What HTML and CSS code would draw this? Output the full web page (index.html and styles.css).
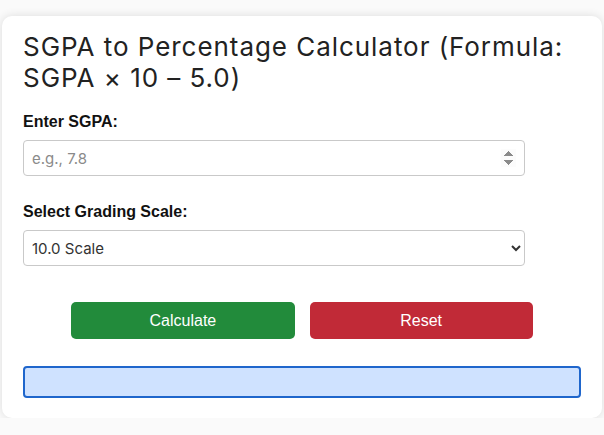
FILE: index.html
```html
<!DOCTYPE html>
<html>
<head>
<meta charset="utf-8">
<link rel="stylesheet" href="styles.css">
</head>
<body>
<div class="card">
  <h2 class="title">SGPA to Percentage Calculator (Formula: SGPA × 10 – 5.0)</h2>
  <label class="label" for="sgpa">Enter SGPA:</label>
  <div class="field">
    <input class="input" id="sgpa" type="number" placeholder="e.g., 7.8">
  </div>
  <label class="label" for="scale">Select Grading Scale:</label>
  <div class="field">
    <select class="input select" id="scale">
      <option>10.0 Scale</option>
    </select>
  </div>
  <div class="buttons">
    <button class="btn btn-green">Calculate</button>
    <button class="btn btn-red">Reset</button>
  </div>
  <div class="result"></div>
</div>
</body>
</html>
```

FILE: styles.css
```css
html, body {
  margin: 0;
  padding: 0;
  background: #fafafa;
}
.card {
  width: 600px;
  box-sizing: border-box;
  margin: 16px auto 0;
  background: #ffffff;
  border-radius: 10px;
  box-shadow: 0 0 10px rgba(0, 0, 0, 0.12);
  padding: 15px 21px 20px;
}
.title {
  margin: 0 0 20px;
  font-family: Inter, "Open Sans", sans-serif;
  font-weight: 400;
  font-size: 26px;
  line-height: 31px;
  color: #222;
  letter-spacing: 0.95px;
}
.label {
  display: block;
  font-family: "Liberation Sans", Arial, sans-serif;
  font-weight: bold;
  font-size: 16px;
  line-height: 18px;
  color: #111;
  margin: 0 0 9px;
}
.field {
  margin-bottom: 27px;
}
.input {
  display: block;
  box-sizing: border-box;
  width: 90%;
  height: 36px;
  padding: 0 8px;
  border: 1px solid #c9c9c9;
  border-radius: 4px;
  font-family: Inter, "Open Sans", sans-serif;
  font-size: 15px;
  color: #333;
  background: #fff;
}
.input::placeholder {
  color: #8a8a8a;
}
.input::-webkit-inner-spin-button {
  opacity: 1;
}
.select {
  padding-left: 4px;
}
.buttons {
  display: flex;
  justify-content: center;
  gap: 15px;
  margin-top: 36px;
}
.btn {
  width: 40%;
  height: 37px;
  border: none;
  border-radius: 5px;
  color: #fff;
  font-family: "Liberation Sans", Arial, sans-serif;
  font-size: 16px;
}
.btn-green {
  background: #228b3b;
}
.btn-red {
  background: #c12a37;
}
.result {
  margin-top: 27px;
  height: 32px;
  box-sizing: border-box;
  background: #cfe2ff;
  border: 2px solid #1f66cc;
  border-radius: 4px;
}
```
